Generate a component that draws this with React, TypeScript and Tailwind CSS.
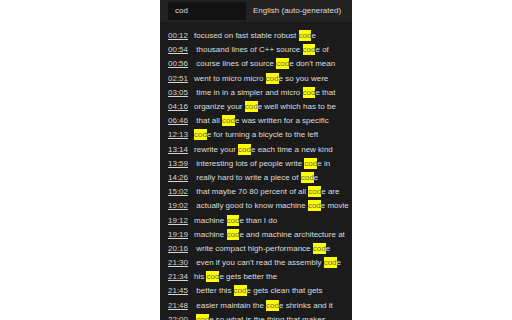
import React from "react";

const rows: [string, string, string, string][] = [
  ["00:12", "focused on fast stable robust ", "cod", "e"],
  ["00:54", " thousand lines of C++ source ", "cod", "e of"],
  ["00:56", " course lines of source ", "cod", "e don't mean"],
  ["02:51", "went to micro micro ", "cod", "e so you were"],
  ["03:05", " time in in a simpler and micro ", "cod", "e that"],
  ["04:16", "organize your ", "cod", "e well which has to be"],
  ["06:46", " that all ", "cod", "e was written for a specific"],
  ["12:13", "", "cod", "e for turning a bicycle to the left"],
  ["13:14", "rewrite your ", "cod", "e each time a new kind"],
  ["13:59", " interesting lots of people write ", "cod", "e in"],
  ["14:26", " really hard to write a piece of ", "cod", "e"],
  ["15:02", " that maybe 70 80 percent of all ", "cod", "e are"],
  ["19:02", " actually good to know machine ", "cod", "e movie"],
  ["19:12", "machine ", "cod", "e than I do"],
  ["19:19", "machine ", "cod", "e and machine architecture at"],
  ["20:16", " write compact high-performance ", "cod", "e"],
  ["21:30", " even if you can't read the assembly ", "cod", "e"],
  ["21:34", "his ", "cod", "e gets better the"],
  ["21:45", " better this ", "cod", "e gets clean that gets"],
  ["21:48", " easier maintain the ", "cod", "e shrinks and it"],
  ["22:00", " ", "cod", "e so what is the thing that makes"],
];

export default function App() {
  return (
    <div
      className="w-[512px] h-[320px] bg-white flex justify-center overflow-hidden"
      style={{ fontFamily: '"Liberation Sans", Arial, sans-serif' }}
    >
      <div className="w-[192px] h-full bg-[#1b1b1b] flex flex-col overflow-hidden">
        <div className="h-[22px] bg-[#222222] flex items-center pl-[8px] gap-[7px] shrink-0">
          <div className="w-[78px] h-[18px] bg-[#121212] flex items-center pl-[7px] text-[8px] text-[#dddddd]">
            cod
          </div>
          <div className="text-[8px] text-[#dddddd] whitespace-nowrap">English (auto-generated)</div>
        </div>
        <div className="pt-[7px] pl-[8px] flex flex-col">
          {rows.map(([t, a, h, b]) => (
            <div key={t} className="h-[14.2px] shrink-0 flex items-center text-[8px] leading-[10px] whitespace-pre text-[#dddddd]">
              <span className="underline text-[#d4d4d4] mr-[6px]">{t}</span>
              <span>
                {a}
                <span className="bg-[#ffff00] text-[#666666] py-[1px]">{h}</span>
                {b}
              </span>
            </div>
          ))}
        </div>
      </div>
    </div>
  );
}
